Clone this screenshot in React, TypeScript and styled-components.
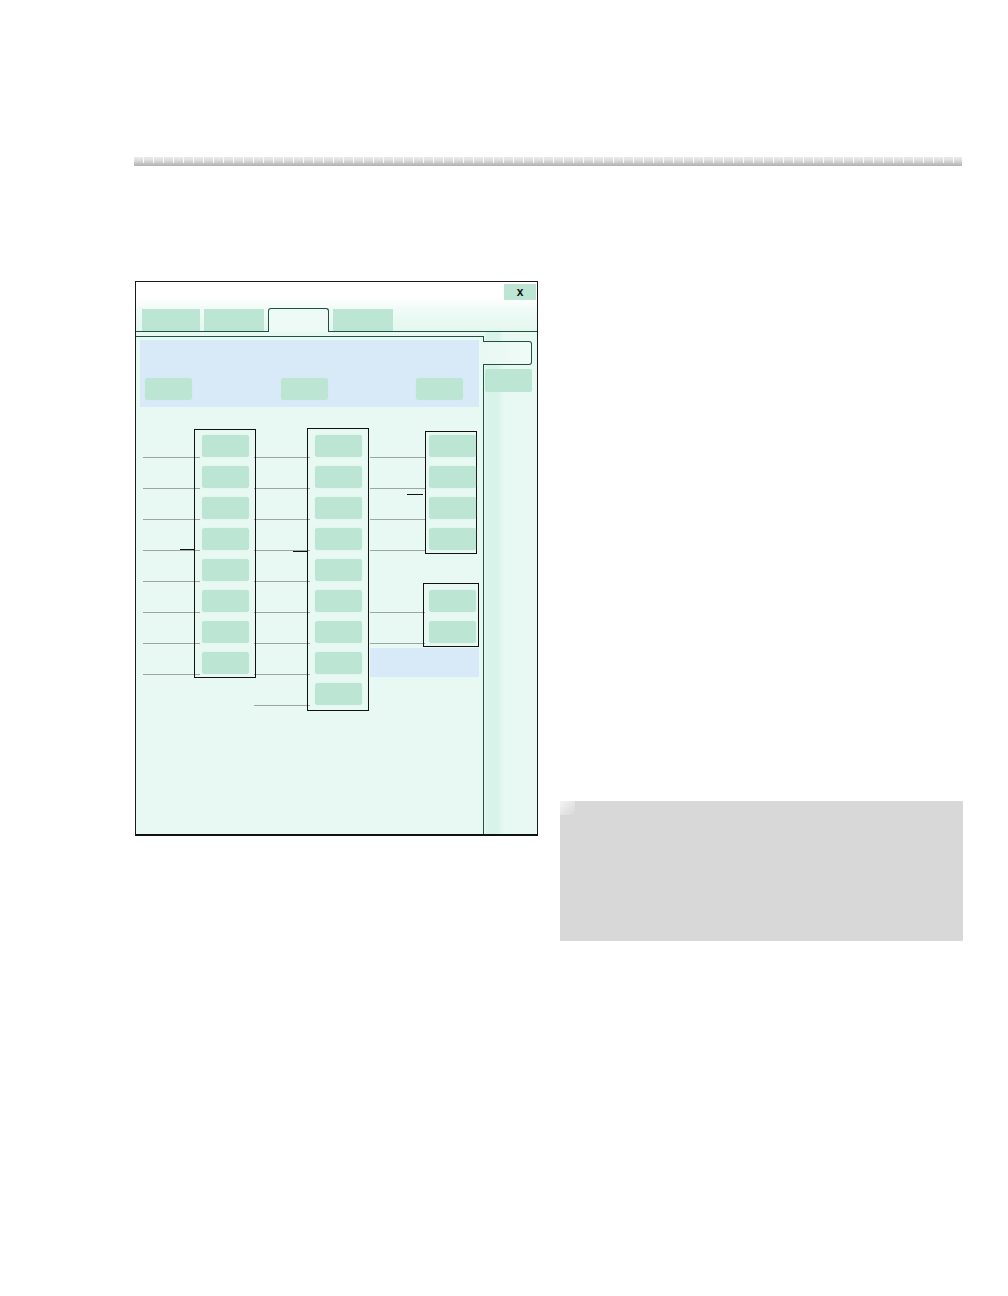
import React from "react";
import styled, { createGlobalStyle } from "styled-components";

const Global = createGlobalStyle`
  html, body { margin: 0; padding: 0; background: #ffffff; }
  body { font-family: "Liberation Sans", Arial, sans-serif; }
  * { box-sizing: border-box; }
`;

const Page = styled.div`
  width: 1008px;
  height: 1296px;
  padding-top: 157px;
`;

const HeaderBar = styled.div`
  margin-left: 134px;
  width: 828px;
  height: 9px;
  background:
    repeating-linear-gradient(90deg, transparent 0 9px, rgba(255,255,255,0.8) 9px 10px) top left / 100% 6px no-repeat,
    linear-gradient(#ececec 0, #dcdcdc 40%, #c8c8c8 65%, #b2b2b2 100%);
`;

const MainRow = styled.div`
  display: flex;
  align-items: flex-start;
  margin-top: 115px;
  padding-left: 135px;
  gap: 22px;
`;

const Window = styled.div`
  width: 403px;
  height: 555px;
  display: flex;
  flex-direction: column;
  background: #e8f8f2;
  border: 1px solid #1a1a1a;
  border-bottom: 2px solid #111;
`;

const TitleBar = styled.div`
  height: 26px;
  flex: none;
  display: flex;
  justify-content: flex-end;
  align-items: flex-start;
  padding: 2px 1px 0 0;
  background: linear-gradient(#ffffff 0, #ffffff 55%, #f2fbf8 100%);
`;

const CloseButton = styled.div`
  width: 32px;
  height: 16px;
  background: #bde5d3;
  color: #111;
  font-family: "Liberation Sans", Arial, sans-serif;
  font-weight: 700;
  font-size: 12px;
  line-height: 16px;
  text-align: center;
`;

const TabStrip = styled.div`
  height: 24px;
  flex: none;
  display: flex;
  align-items: flex-end;
  gap: 4px;
  padding-left: 6px;
  border-bottom: 1px solid #1f4f45;
  background: linear-gradient(#f0fbf7, #e4f7ef);
`;

const Tab = styled.div<{ $active?: boolean; $w: number }>`
  width: ${(p) => p.$w}px;
  height: ${(p) => (p.$active ? 24 : 22)}px;
  margin-bottom: ${(p) => (p.$active ? -1 : 0)}px;
  background: ${(p) => (p.$active ? "#eefaf5" : "#bde5d3")};
  border: ${(p) => (p.$active ? "1px solid #1f4f45" : "none")};
  border-bottom: none;
  border-radius: ${(p) => (p.$active ? "3px 3px 0 0" : "0")};
`;

const Body = styled.div`
  flex: 1;
  display: flex;
  align-items: stretch;
`;

const LeftPanel = styled.div`
  width: 348px;
  margin-top: 4px;
  border-top: 1px solid #1f4f45;
  border-right: 1px solid #1f4f45;
  padding-top: 3px;
  background: #e8f8f2;
`;

const Band = styled.div`
  margin-left: 4px;
  width: 339px;
  height: 67px;
  background: #d8eaf8;
  display: flex;
  justify-content: space-between;
  align-items: flex-start;
  padding: 38px 16px 0 5px;
`;

const GreenButton = styled.div`
  width: 47px;
  height: 22px;
  flex: none;
  background: #bde5d3;
  border-radius: 3px;
  box-shadow: 0 0 1px rgba(189, 229, 211, 0.9);
`;

const Diagram = styled.div`
  display: flex;
  align-items: flex-start;
  margin-top: 21px;
  padding-left: 7px;
`;

const Leader = styled.div<{ $w: number }>`
  width: ${(p) => p.$w}px;
  flex: none;
  display: flex;
  flex-direction: column;
  gap: 30px;
  padding-top: 29px;
`;

const Line = styled.div<{ $l: number; $r: number; $off?: boolean }>`
  height: 1px;
  margin-left: ${(p) => -p.$l}px;
  margin-right: ${(p) => -p.$r}px;
  background: ${(p) => (p.$off ? "transparent" : "#9ea6a2")};
`;

const Group = styled.div<{
  $w: number;
  $mt: number;
  $ml?: number;
  $pad: string;
  $tickLeft: number;
  $tickTop: number;
  $tickW: number;
}>`
  position: relative;
  flex: none;
  width: ${(p) => p.$w}px;
  margin-top: ${(p) => p.$mt}px;
  margin-left: ${(p) => p.$ml ?? 0}px;
  border: 1px solid #111;
  padding: ${(p) => p.$pad};
  display: flex;
  flex-direction: column;
  gap: 9px;

  &::before {
    content: "";
    position: absolute;
    left: ${(p) => p.$tickLeft}px;
    top: ${(p) => p.$tickTop}px;
    width: ${(p) => p.$tickW}px;
    height: 1px;
    background: #111;
  }
`;

const PlainGroup = styled.div<{ $w: number; $mt: number; $pad: string }>`
  flex: none;
  width: ${(p) => p.$w}px;
  margin-top: ${(p) => p.$mt}px;
  border: 1px solid #111;
  padding: ${(p) => p.$pad};
  display: flex;
  flex-direction: column;
  gap: 9px;
`;

const ThirdColumn = styled.div`
  width: 110px;
  flex: none;
  display: flex;
  flex-direction: column;
`;

const ThirdRow = styled.div`
  display: flex;
  align-items: flex-start;
`;

const Stack = styled.div`
  width: 56px;
  flex: none;
  display: flex;
  flex-direction: column;
`;

const BlueRect = styled.div`
  margin: 1px 0 0 1px;
  width: 109px;
  height: 29px;
  background: #d8eaf8;
`;

const RightColumn = styled.div`
  flex: 1;
  padding-top: 9px;
  background: linear-gradient(90deg, #e8f8f2 0, #d8f4ea 3px, #d8f4ea 14px, #e8f8f2 20px, #e8f8f2 100%);
`;

const SideTab = styled.div`
  position: relative;
  z-index: 1;
  margin-left: -1px;
  width: 49px;
  height: 24px;
  background: linear-gradient(90deg, #e8f8f2, #f0fbf7);
  border: 1px solid #1f4f45;
  border-left: none;
  border-radius: 0 3px 3px 0;
`;

const SideBlock = styled.div`
  margin: 4px 0 0 1px;
  width: 47px;
  height: 23px;
  background: #bde5d3;
  border-radius: 2px;
`;

const GrayBox = styled.div`
  position: relative;
  margin-top: 520px;
  width: 403px;
  height: 140px;
  background: #d8d8d8;

  &::before {
    content: "";
    position: absolute;
    left: 0;
    top: 0;
    width: 15px;
    height: 14px;
    background: linear-gradient(135deg, #f4f4f4, #d8d8d8);
  }
`;

const buttons = (n: number) =>
  Array.from({ length: n }, (_, i) => <GreenButton key={i} />);

export default function App() {
  return (
    <Page>
      <Global />
      <HeaderBar />
      <MainRow>
        <Window>
          <TitleBar>
            <CloseButton>x</CloseButton>
          </TitleBar>
          <TabStrip>
            <Tab $w={58} />
            <Tab $w={60} />
            <Tab $w={61} $active />
            <Tab $w={60} />
          </TabStrip>
          <Body>
            <LeftPanel>
              <Band>
                <GreenButton />
                <GreenButton />
                <GreenButton />
              </Band>
              <Diagram>
                <Leader $w={51}>
                  {Array.from({ length: 8 }, (_, i) => (
                    <Line key={i} $l={0} $r={6} />
                  ))}
                </Leader>
                <Group
                  $w={62}
                  $mt={1}
                  $pad="5px 6px 3px 7px"
                  $tickLeft={-15}
                  $tickTop={119}
                  $tickW={14}
                >
                  {buttons(8)}
                </Group>
                <Leader $w={51}>
                  {Array.from({ length: 9 }, (_, i) => (
                    <Line key={i} $l={2} $r={3} />
                  ))}
                </Leader>
                <Group
                  $w={62}
                  $mt={0}
                  $pad="6px 6px 5px 7px"
                  $tickLeft={-15}
                  $tickTop={122}
                  $tickW={14}
                >
                  {buttons(9)}
                </Group>
                <ThirdColumn>
                  <ThirdRow>
                    <Leader $w={54}>
                      <Line $l={-1} $r={2} />
                      <Line $l={-1} $r={2} />
                      <Line $l={-1} $r={2} />
                      <Line $l={-1} $r={2} />
                      <Line $l={-1} $r={2} $off />
                      <Line $l={-1} $r={2} />
                      <Line $l={-1} $r={2} />
                    </Leader>
                    <Stack>
                      <Group
                        $w={52}
                        $mt={3}
                        $ml={2}
                        $pad="3px 0 3px 3px"
                        $tickLeft={-19}
                        $tickTop={62}
                        $tickW={16}
                      >
                        {buttons(4)}
                      </Group>
                      <PlainGroup $w={56} $mt={29} $pad="6px 2px 3px 5px">
                        {buttons(2)}
                      </PlainGroup>
                    </Stack>
                  </ThirdRow>
                  <BlueRect />
                </ThirdColumn>
              </Diagram>
            </LeftPanel>
            <RightColumn>
              <SideTab />
              <SideBlock />
            </RightColumn>
          </Body>
        </Window>
        <GrayBox />
      </MainRow>
    </Page>
  );
}
